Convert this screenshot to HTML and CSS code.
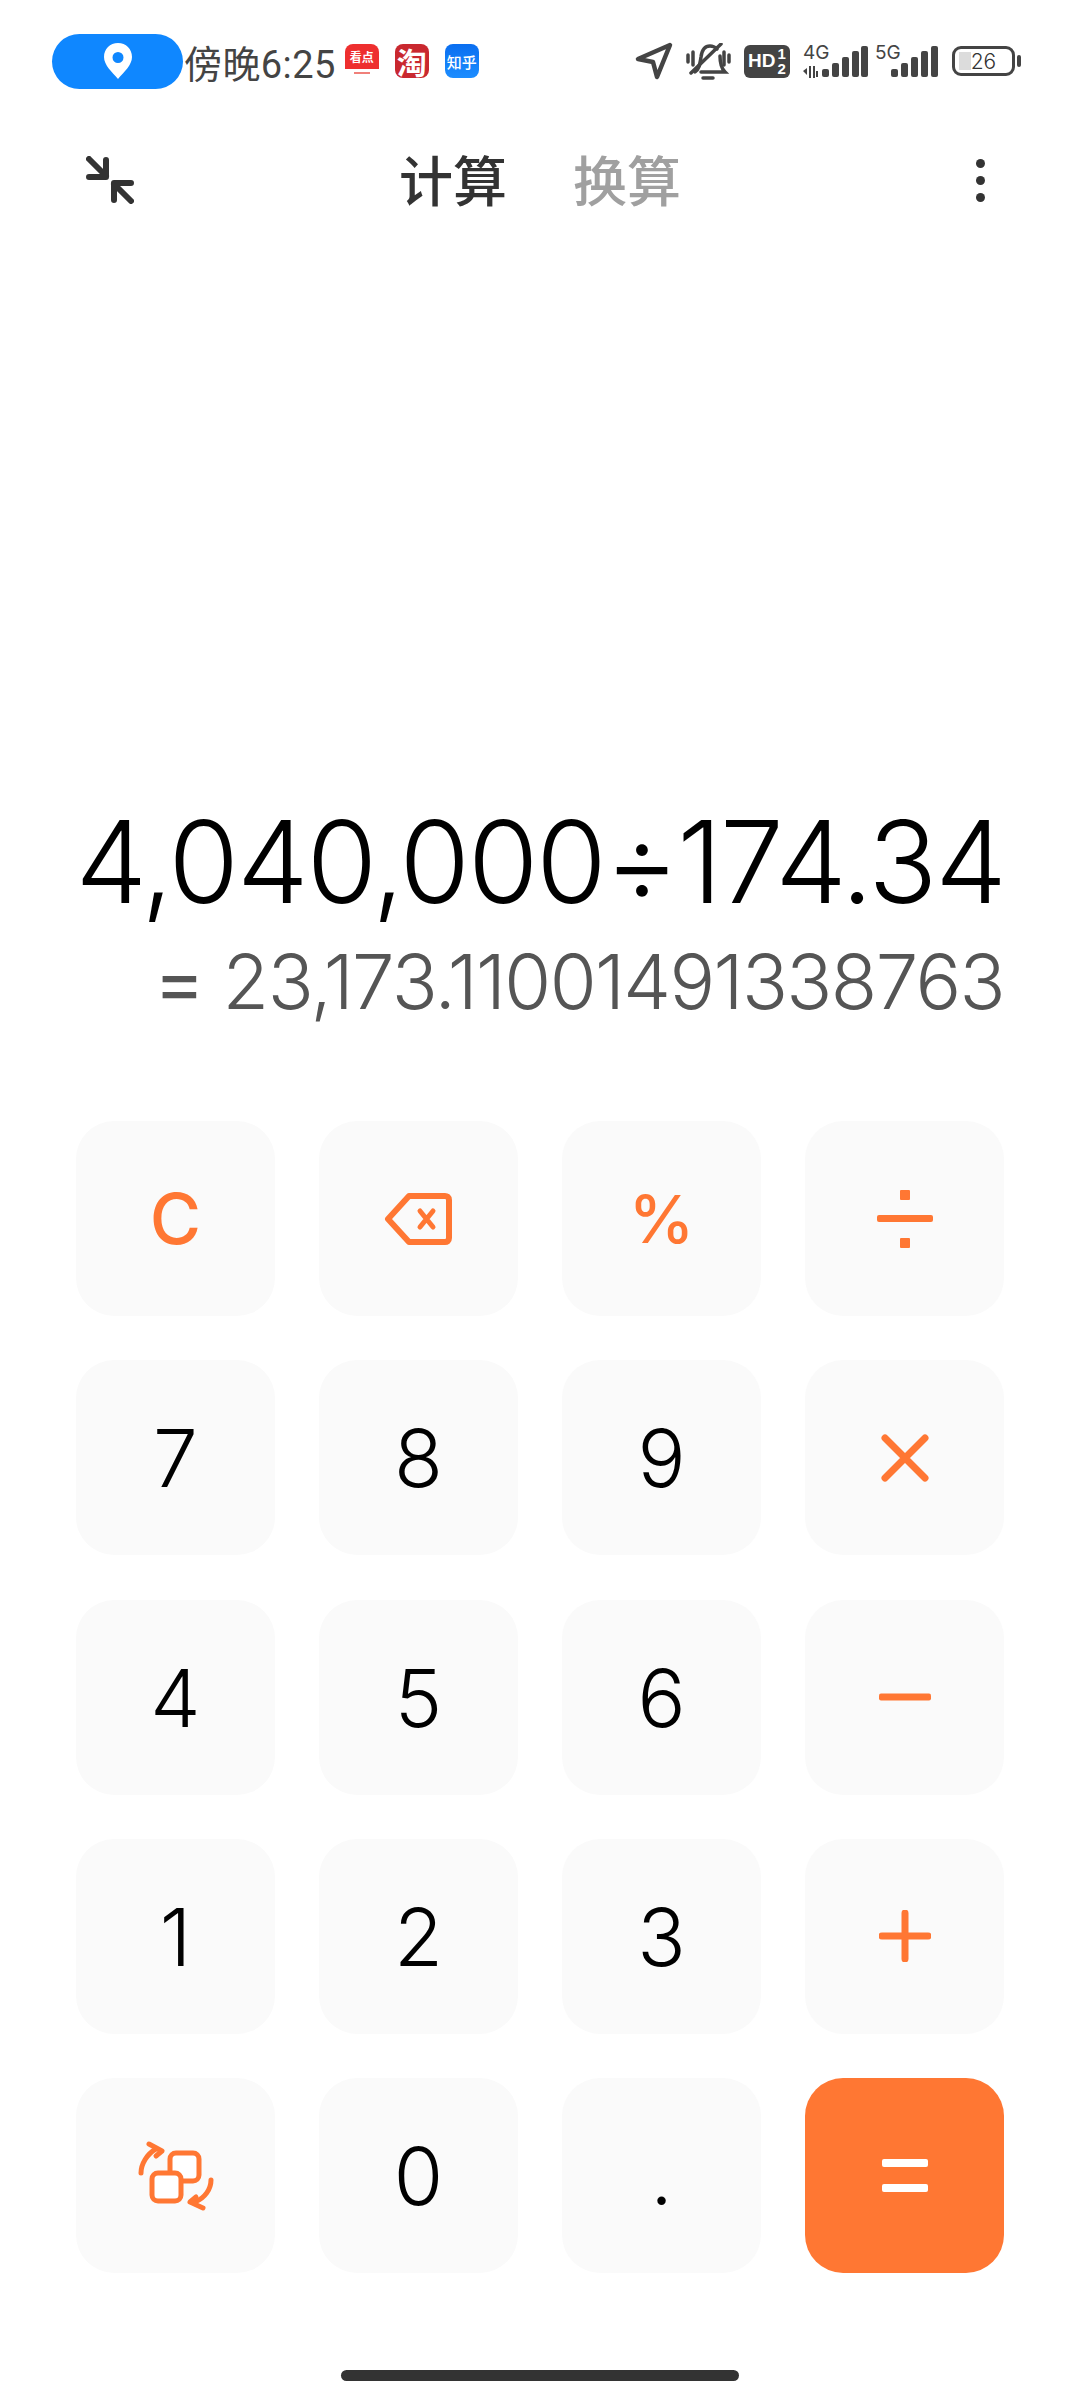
FILE: index.html
```html
<!DOCTYPE html>
<html lang="zh-CN">
<head>
    <meta charset="UTF-8">
    <meta name="viewport" content="width=device-width, initial-scale=1.0">
    <title>计算器</title>
    <link rel="stylesheet" href="styles.css">
</head>
<body>
    <div class="phone">
        <!-- status bar -->
        <div class="status-bar">
            <div class="status-left">
                <div class="location-pill">
                    <svg width="28" height="36" viewBox="0 0 28 36"><path fill="#fff" fill-rule="evenodd" d="M14 0C6 0 0 6 0 14c0 8 8 15 14 22 6-7 14-14 14-22C28 6 22 0 14 0zm0 9a5.5 5.5 0 1 1 0 11 5.5 5.5 0 0 1 0-11z"/></svg>
                </div>
                <span class="clock">傍晚6:25</span>
                <div class="app-icon app-kandian"><span class="kandian-text">看点</span><span class="kandian-wave"></span></div>
                <div class="app-icon app-taobao"><span>淘</span></div>
                <div class="app-icon app-zhihu"><span>知乎</span></div>
            </div>
            <div class="status-right">
                <svg class="ic-nav" width="38" height="38" viewBox="0 0 38 38"><path fill="none" stroke="#444" stroke-width="4.5" stroke-linejoin="round" d="M35 3L3 17l15 3 4 15z"/></svg>
                <svg class="ic-bell" width="46" height="37" viewBox="0 0 46 37"><g fill="none" stroke="#444" stroke-width="3.5" stroke-linecap="round"><path d="M9 29c5-4 5-9 6-15 1-8 5-11 9-11 3 0 5 1 7 3"/><path d="M34 13c0 7 1 12 5 16H15"/><path d="M5 30L35 1"/><path d="M17 35h10"/><path d="M2 12v7M7 9v13M38 9v13M43 12v7"/></g></svg>
                <div class="hd-badge"><span class="hd-text">HD</span><span class="hd-sims"><span>1</span><span>2</span></span></div>
                <div class="signal signal-4g">
                    <span class="net-label">4G</span>
                    <svg width="66" height="33" viewBox="0 0 66 33"><g fill="#444"><path d="M1 26l4-3v7zM7 21h2v12H7zM11 21h2v12h-2zM14 26h2v6h-2z"/><rect x="20" y="24" width="7" height="8" rx="2"/><rect x="30" y="18" width="7" height="14" rx="2"/><rect x="40" y="12" width="7" height="20" rx="2"/><rect x="50" y="6" width="7" height="26" rx="2"/><rect x="59" y="1" width="7" height="31" rx="2"/></g></svg>
                </div>
                <div class="signal signal-5g">
                    <span class="net-label">5G</span>
                    <svg width="63" height="33" viewBox="0 0 63 33"><g fill="#444"><rect x="16" y="24" width="7" height="8" rx="2"/><rect x="26" y="18" width="7" height="14" rx="2"/><rect x="36" y="12" width="7" height="20" rx="2"/><rect x="46" y="6" width="7" height="26" rx="2"/><rect x="56" y="1" width="7" height="31" rx="2"/></g></svg>
                </div>
                <div class="battery">
                    <div class="battery-body"><span class="battery-fill"></span><span class="battery-num">26</span></div>
                    <span class="battery-nub"></span>
                </div>
            </div>
        </div>

        <!-- toolbar -->
        <div class="toolbar">
            <svg class="ic-collapse" width="48" height="48" viewBox="0 0 48 48"><g fill="none" stroke="#333" stroke-width="6" stroke-linecap="round" stroke-linejoin="round"><path d="M3 3l17 17M3 21h17V4"/><path d="M45 45L28 28M45 27H28v17"/></g></svg>
            <div class="tabs">
                <span class="tab tab-active">计算</span>
                <span class="tab">换算</span>
            </div>
            <div class="menu-dots"><span></span><span></span><span></span></div>
        </div>

        <!-- display -->
        <div class="display">
            <div class="expression">4,040,000÷174.34</div>
            <div class="result"><span class="result-eq">=</span> 23,173.11001491338763</div>
        </div>

        <!-- keypad -->
        <div class="keypad">
            <div class="key key-op key-text">C</div>
            <div class="key key-op">
                <svg width="70" height="52" viewBox="0 0 70 52"><g fill="none" stroke="#ff7733" stroke-linecap="round" stroke-linejoin="round"><path stroke-width="6" d="M25 3h36c2 0 4 1 4 4v38c0 3-2 4-4 4H25L4 26z"/><path stroke-width="5" d="M36 18l13 16M49 18L36 34"/></g></svg>
            </div>
            <div class="key key-op key-text key-percent">%</div>
            <div class="key key-op">
                <svg width="56" height="60" viewBox="0 0 56 60"><g fill="#ff7733"><rect x="23" y="1" width="10" height="10" rx="1"/><rect x="0" y="26" width="56" height="7" rx="2"/><rect x="23" y="49" width="10" height="10" rx="1"/></g></svg>
            </div>

            <div class="key">7</div>
            <div class="key">8</div>
            <div class="key">9</div>
            <div class="key key-op">
                <svg width="48" height="48" viewBox="0 0 48 48"><path fill="none" stroke="#ff7733" stroke-width="7" stroke-linecap="round" d="M4 4l40 40M44 4L4 44"/></svg>
            </div>

            <div class="key">4</div>
            <div class="key">5</div>
            <div class="key">6</div>
            <div class="key key-op">
                <svg width="52" height="8" viewBox="0 0 52 8"><rect width="52" height="7" rx="2" y="0.5" fill="#ff7733"/></svg>
            </div>

            <div class="key">1</div>
            <div class="key">2</div>
            <div class="key">3</div>
            <div class="key key-op">
                <svg width="52" height="52" viewBox="0 0 52 52"><path fill="none" stroke="#ff7733" stroke-width="7" stroke-linecap="round" d="M3 26h46M26 3v46"/></svg>
            </div>

            <div class="key key-op">
                <svg width="76" height="72" viewBox="0 0 76 72"><g fill="none" stroke="#ff7733" stroke-linecap="round" stroke-linejoin="round"><rect x="32" y="13" width="29" height="28" rx="6" fill="#fff" stroke-width="5"/><rect x="14" y="33" width="29" height="28" rx="6" fill="#fff" stroke-width="5"/><path stroke-width="5" d="M3 33C3 24 9 14 18 9"/><path stroke-width="5" d="M11 4l13 7-6 5"/><path stroke-width="5" d="M73 40C73 49 67 58 57 62"/><path stroke-width="5" d="M65 68l-13-6 6-5"/></g></svg>
            </div>
            <div class="key">0</div>
            <div class="key">.</div>
            <div class="key key-equals">
                <svg width="46" height="33" viewBox="0 0 46 33"><g fill="#fff"><rect width="46" height="8" rx="2"/><rect y="25" width="46" height="8" rx="2"/></g></svg>
            </div>
        </div>

        <div class="home-bar"></div>
    </div>
</body>
</html>
```

FILE: styles.css
```css
body {
    margin: 0;
    background-color: #fff;
    font-family: "Inter", "Noto Sans CJK SC", sans-serif;
    color: #000;
}
.phone {
    width: 1080px;
    height: 2400px;
    overflow: hidden;
}

/* status bar */
.status-bar {
    display: flex;
    justify-content: space-between;
    align-items: center;
    height: 56px;
    padding: 33px 59px 0 52px;
}
.status-left, .status-right {
    display: flex;
    align-items: center;
}
.location-pill {
    display: flex;
    align-items: center;
    justify-content: center;
    width: 131px;
    height: 55px;
    border-radius: 28px;
    background-color: #0f87ff;
}
.clock {
    margin-left: 1px;
    margin-right: 9px;
    font-size: 38px;
    letter-spacing: 0.4px;
    color: #444;
    font-family: "Roboto", "Noto Sans CJK SC", sans-serif;
    white-space: nowrap;
}
.app-icon {
    display: flex;
    align-items: center;
    justify-content: center;
    width: 34px;
    height: 34px;
    margin-right: 16px;
    border-radius: 8px;
    color: #fff;
    font-family: "Noto Sans CJK SC", sans-serif;
    font-weight: 700;
    line-height: 1;
    white-space: nowrap;
}
.app-kandian {
    position: relative;
    flex-direction: column;
    justify-content: flex-start;
    background: linear-gradient(#ee2f2f 0 74%, #fff 74%);
    font-size: 12px;
}
.kandian-text {
    margin-top: 7px;
}
.kandian-wave {
    width: 16px;
    height: 2px;
    margin-top: 9px;
    background-color: #f0807a;
}
.app-taobao {
    background-color: #c9282f;
    font-size: 30px;
}
.app-zhihu {
    background: linear-gradient(#0a6ef0, #1c8dff);
    font-size: 15px;
    font-weight: 500;
    margin-right: 0;
}
.status-right svg {
    display: block;
}
.ic-nav {
    margin-right: 13px;
}
.ic-bell {
    margin-right: 12px;
}
.hd-badge {
    display: flex;
    align-items: center;
    justify-content: center;
    gap: 2px;
    width: 46px;
    height: 33px;
    border-radius: 6px;
    background-color: #444;
    color: #fff;
    font-family: "Liberation Sans", sans-serif;
    font-weight: 700;
}
.hd-text {
    font-size: 19px;
}
.hd-sims {
    display: flex;
    flex-direction: column;
    font-size: 15px;
    line-height: 15px;
}
.signal {
    position: relative;
    margin-left: 12px;
    height: 33px;
}
.signal-5g {
    margin-left: 7px;
}
.net-label {
    position: absolute;
    left: 1px;
    top: -2px;
    font-size: 19px;
    line-height: 19px;
    color: #444;
}
.signal-5g .net-label {
    left: 0;
}
.battery {
    display: flex;
    align-items: center;
    margin-left: 14px;
}
.battery-body {
    position: relative;
    display: flex;
    align-items: center;
    justify-content: center;
    box-sizing: border-box;
    width: 63px;
    height: 30px;
    border: 3px solid #444;
    border-radius: 9px;
}
.battery-fill {
    position: absolute;
    left: 4px;
    top: 3px;
    width: 12px;
    height: 18px;
    background-color: #dcdcdc;
}
.battery-num {
    position: relative;
    font-size: 21px;
    font-weight: 300;
    color: #333;
}
.battery-nub {
    width: 4px;
    height: 12px;
    margin-left: 2px;
    border-radius: 2px;
    background-color: #444;
}

/* toolbar */
.toolbar {
    display: flex;
    align-items: center;
    justify-content: space-between;
    height: 60px;
    margin-top: 61px;
    padding: 0 95px 0 86px;
}
.tabs {
    display: flex;
    gap: 66px;
    margin-left: 265px;
    margin-right: auto;
    margin-bottom: 3px;
}
.tab {
    font-family: "Noto Sans CJK SC", sans-serif;
    font-size: 54px;
    font-weight: 500;
    line-height: 57px;
    color: #a0a0a0;
}
.tab-active {
    color: #333;
}
.menu-dots {
    display: flex;
    flex-direction: column;
    gap: 8px;
}
.menu-dots span {
    width: 9px;
    height: 9px;
    border-radius: 50%;
    background-color: #333;
}

/* display */
.display {
    margin-top: 582px;
    padding-right: 75px;
    text-align: right;
    white-space: nowrap;
}
.expression {
    padding-bottom: 4px;
    font-size: 114px;
    font-weight: 350;
    line-height: 140px;
    letter-spacing: -2px;
    color: #000;
}
.result {
    margin-right: 1px;
    font-size: 76px;
    font-weight: 300;
    line-height: 90px;
    color: #555;
    letter-spacing: -1.6px;
}
.result-eq {
    font-weight: 400;
}

/* keypad */
.keypad {
    display: grid;
    grid-template-columns: repeat(4, 199px);
    grid-auto-rows: 195px;
    column-gap: 44px;
    row-gap: 44.25px;
    margin-top: 95px;
    padding-left: 76px;
}
.key {
    display: flex;
    align-items: center;
    justify-content: center;
    border-radius: 38px;
    background-color: #fafafa;
    font-size: 80px;
    font-weight: 350;
    color: #000;
}
.key-op {
    color: #ff7733;
}
.key-text {
    font-size: 70px;
    font-weight: 450;
}
.key-percent {
    font-size: 66px;
}
.key-equals {
    background-color: #ff7733;
}

.home-bar {
    width: 398px;
    height: 11px;
    margin: 97px auto 0;
    border-radius: 6px;
    background-color: #333;
}
```
